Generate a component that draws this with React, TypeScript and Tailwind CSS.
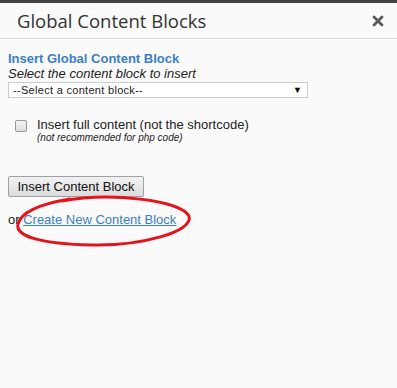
import React from "react";

const App: React.FC = () => {
  return (
    <div className="relative w-[397px] h-[388px] bg-[#fafafa] overflow-hidden flex flex-col">
      <div className="h-[3px] bg-[#444]" />
      {/* header */}
      <div className="h-[36px] flex items-center justify-between pl-[17px] pr-[13px] border-b border-[#dcdcdc]">
        <h1 className="text-[18.5px] text-[#333] font-['Open_Sans',sans-serif] leading-none mt-[1px]">
          Global Content Blocks
        </h1>
        <svg width="12" height="12" viewBox="0 0 12 12" className="mt-[1px]">
          <path d="M2 2 L10 10 M10 2 L2 10" stroke="#5a5a5a" strokeWidth="2.8" strokeLinecap="round" />
        </svg>
      </div>

      <div className="px-[8px] pt-[12px] font-['Liberation_Sans',Arial,sans-serif]">
        <div className="text-[13px] font-bold text-[#3b7fc4] leading-[15px]">
          Insert Global Content Block
        </div>
        <div className="text-[13px] italic text-[#222] leading-[15px]">
          Select the content block to insert
        </div>
        <div className="mt-[1px] w-[300px] h-[16px] border border-[#ccc] bg-white flex items-center justify-between pl-[4px] pr-[5px]">
          <span className="text-[11px] text-[#222] leading-none tracking-[0.3px]">--Select a content block--</span>
          <span className="text-[9px] text-black leading-none">▼</span>
        </div>

        <div className="mt-[19px] flex items-start gap-[10px] pl-[7px]">
          <div className="mt-[3px] w-[12px] h-[12px] rounded-[2px] border border-[#999] bg-gradient-to-b from-[#f4f4f4] to-[#dedede]" />
          <div>
            <div className="text-[13px] text-[#222] leading-[15px]">Insert full content (not the shortcode)</div>
            <div className="text-[10px] italic text-[#222] leading-[12px]">(not recommended for php code)</div>
          </div>
        </div>

        <button className="mt-[32px] h-[21px] w-[136px] border border-[#a0a0a0] rounded-[2px] bg-gradient-to-b from-[#f2f2f2] to-[#dcdcdc] text-[13px] text-[#111] leading-none">
          Insert Content Block
        </button>

        <div className="mt-[14px] text-[13px] text-[#222] leading-[15px]">
          or <a href="#" className="text-[#3b7fc4] underline">Create New Content Block</a>
        </div>
      </div>

      {/* hand-drawn highlight */}
      <svg className="absolute left-0 top-0 pointer-events-none" width="397" height="388">
        <path
          d="M62 201 C 110 192, 180 200, 189 216 C 194 232, 140 246, 92 245 C 40 244, 15 236, 18 224 C 21 212, 40 204, 70 199"
          fill="none"
          stroke="#e3141c"
          strokeWidth="3"
          strokeLinecap="round"
        />
      </svg>
    </div>
  );
};

export default App;
